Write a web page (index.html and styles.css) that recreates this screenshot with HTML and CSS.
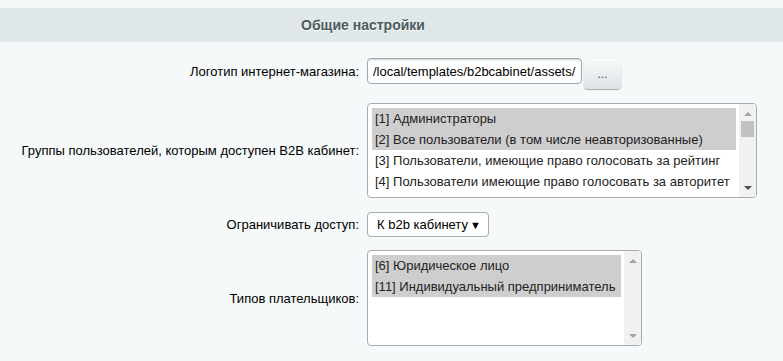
FILE: index.html
```html
<!DOCTYPE html>
<html lang="ru">
<head>
    <meta charset="UTF-8">
    <meta name="viewport" content="width=device-width, initial-scale=1.0">
    <title>Общие настройки</title>
    <link rel="stylesheet" href="styles.css">
</head>
<body>

    <div class="settings">
        <div class="heading">Общие настройки</div>

        <div class="form">
            <div class="label label-first">Логотип интернет-магазина:</div>
            <div class="field">
                <input class="text-input" type="text" value="/local/templates/b2bcabinet/assets/">
                <button class="btn" type="button">...</button>
            </div>

            <div class="label">Группы пользователей, которым доступен B2B кабинет:</div>
            <div class="listbox listbox-groups">
                <div class="options">
                    <div class="option selected">[1] Администраторы</div>
                    <div class="option selected">[2] Все пользователи (в том числе неавторизованные)</div>
                    <div class="option">[3] Пользователи, имеющие право голосовать за рейтинг</div>
                    <div class="option">[4] Пользователи имеющие право голосовать за авторитет</div>
                </div>
                <div class="scrollbar">
                    <span class="arrow arrow-up"></span>
                    <span class="thumb"></span>
                    <span class="arrow arrow-down active"></span>
                </div>
            </div>

            <div class="label">Ограничивать доступ:</div>
            <div class="field">
                <div class="select">
                    <span>К b2b кабинету</span>
                    <span class="select-arrow">▼</span>
                </div>
            </div>

            <div class="label label-last">Типов плательщиков:</div>
            <div class="listbox listbox-payers">
                <div class="options">
                    <div class="option selected">[6] Юридическое лицо</div>
                    <div class="option selected">[11] Индивидуальный предприниматель</div>
                </div>
                <div class="scrollbar">
                    <span class="arrow arrow-up"></span>
                    <span class="arrow arrow-down"></span>
                </div>
            </div>
        </div>
    </div>

</body>
</html>
```

FILE: styles.css
```css
body {
    margin: 0;
    background-color: #f5f9f9;
    font-family: "Liberation Sans", Arial, sans-serif;
    font-size: 13px;
    color: #000;
}
.settings {
    padding-top: 8px;
}
.heading {
    height: 34px;
    line-height: 34px;
    background-color: #e0e7e8;
    color: #4b5a61;
    font-weight: bold;
    font-size: 14px;
    text-align: center;
    padding-right: 57px;
    text-shadow: 0 1px #fff;
}
.form {
    display: grid;
    grid-template-columns: 359px 1fr;
    column-gap: 8px;
    row-gap: 14px;
    align-items: center;
    padding-top: 16px;
}
.label {
    text-align: right;
}
.label-first {
    margin-bottom: 4px;
}
.label-last {
    margin-top: -1px;
}
.field {
    display: flex;
    align-items: flex-start;
    gap: 2px;
}
.text-input {
    width: 215px;
    height: 26px;
    box-sizing: border-box;
    padding: 0 5px;
    border: 1px solid #9ea7b0;
    border-radius: 4px;
    background: #fff;
    font-family: inherit;
    font-size: 13px;
    color: #000;
    box-shadow: inset 0 2px 2px -1px rgba(180, 188, 191, 0.7);
}
.btn {
    width: 37px;
    height: 30px;
    margin-top: 1px;
    border: none;
    border-radius: 4px;
    background: linear-gradient(to bottom, #f8fbfb, #dce3e5);
    box-shadow: 0 0 1px rgba(0, 0, 0, 0.25), 0 1px 1px rgba(0, 0, 0, 0.3), inset 0 1px #fff;
    color: #3f4b54;
    font-family: inherit;
    font-size: 12px;
    padding: 0;
}

/* listbox */
.listbox {
    display: flex;
    box-sizing: border-box;
    border: 1px solid #a5adb3;
    border-radius: 4px;
    background: #fff;
    overflow: hidden;
}
.listbox-groups {
    width: 390px;
    height: 95px;
}
.listbox-payers {
    width: 275px;
    height: 96px;
    margin-top: -1px;
}
.options {
    flex: 1;
    padding: 4px 3px 4px 4px;
}
.option {
    height: 21px;
    line-height: 21px;
    padding-left: 3px;
    white-space: nowrap;
    color: #222;
}
.option.selected {
    background-color: #cecece;
}
.scrollbar {
    width: 17px;
    background: #f1f1f1;
    display: flex;
    flex-direction: column;
    align-items: center;
}
.arrow {
    width: 0;
    height: 0;
    border-left: 4px solid transparent;
    border-right: 4px solid transparent;
}
.arrow-up {
    margin-top: 8px;
    border-bottom: 4px solid #a3a3a3;
}
.arrow-down {
    margin-top: auto;
    margin-bottom: 7px;
    border-top: 4px solid #a3a3a3;
}
.arrow-down.active {
    border-top-color: #505050;
}
.thumb {
    width: 13px;
    height: 16px;
    margin-top: 5px;
    background: #c1c1c1;
}

/* select */
.select {
    width: 122px;
    height: 25px;
    box-sizing: border-box;
    display: flex;
    align-items: center;
    justify-content: space-between;
    padding: 0 7px 0 9px;
    border: 1px solid #a5adb3;
    border-radius: 4px;
    background: #fff;
}
.select-arrow {
    font-size: 11px;
}
```
